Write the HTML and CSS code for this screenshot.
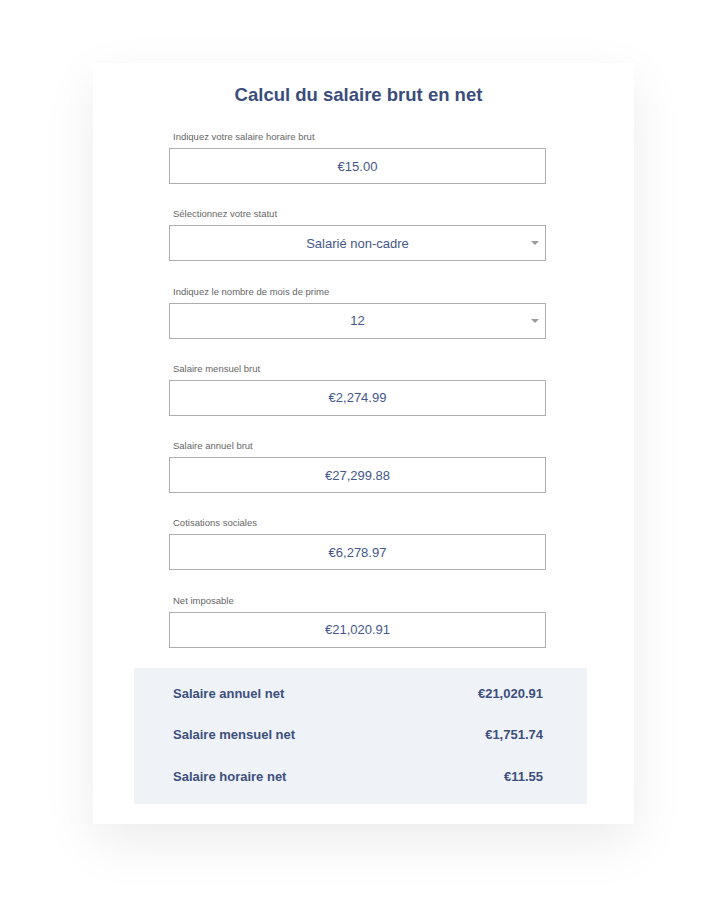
FILE: index.html
```
<!doctype html>
<html>
  <head>
    <meta charset="UTF-8" />
    <title>Calcul du salaire brut en net</title>
    <link rel="stylesheet" href="styles.css">
  </head>
  <body>
    <div class="card">
      <h1 class="title">Calcul du salaire brut en net</h1>

      <div class="fields">
        <div class="field">
          <label for="hourly">Indiquez votre salaire horaire brut</label>
          <input id="hourly" type="text" value="€15.00" />
        </div>

        <div class="field">
          <label for="status">Sélectionnez votre statut</label>
          <div class="select-wrap">
            <select id="status">
              <option>Salarié non-cadre</option>
              <option>Salarié cadre</option>
            </select>
          </div>
        </div>

        <div class="field">
          <label for="months">Indiquez le nombre de mois de prime</label>
          <div class="select-wrap">
            <select id="months">
              <option>12</option>
              <option>13</option>
              <option>14</option>
            </select>
          </div>
        </div>

        <div class="field">
          <label for="monthly-gross">Salaire mensuel brut</label>
          <input id="monthly-gross" type="text" value="€2,274.99" readonly />
        </div>

        <div class="field">
          <label for="annual-gross">Salaire annuel brut</label>
          <input id="annual-gross" type="text" value="€27,299.88" readonly />
        </div>

        <div class="field">
          <label for="social">Cotisations sociales</label>
          <input id="social" type="text" value="€6,278.97" readonly />
        </div>

        <div class="field">
          <label for="taxable">Net imposable</label>
          <input id="taxable" type="text" value="€21,020.91" readonly />
        </div>
      </div>

      <!-- Results -->
      <div class="results">
        <div class="result-row">
          <span>Salaire annuel net</span>
          <span>€21,020.91</span>
        </div>
        <div class="result-row">
          <span>Salaire mensuel net</span>
          <span>€1,751.74</span>
        </div>
        <div class="result-row">
          <span>Salaire horaire net</span>
          <span>€11.55</span>
        </div>
      </div>
    </div>
  </body>
</html>
```

FILE: styles.css
```
html {
  min-height: 100%;
  background-color: #fff;
}

body {
  font-family: "Liberation Sans", Arial, Helvetica, sans-serif;
  margin: 0;
  padding: 0 0 80px;
  color: #3c4f7d;
}

.card {
  width: 541px;
  margin: 63px 0 0 93px;
  padding: 21px 0 20px;
  box-sizing: border-box;
  background: white;
  box-shadow: 0 18px 50px rgba(0, 0, 0, 0.08);
}

.title {
  margin: 0 0 25px;
  padding-right: 10px;
  font-size: 18.5px;
  line-height: 22px;
  font-weight: bold;
  text-align: center;
  color: #3a4d7b;
}

.fields {
  width: 377px;
  margin-left: 76px;
}

.field {
  margin-bottom: 24.3px;
}

.field:last-child {
  margin-bottom: 20px;
}

.field label {
  display: block;
  font-size: 9.5px;
  line-height: 11px;
  margin-bottom: 6px;
  padding-left: 4px;
  color: #666;
}

.field input,
.field select {
  display: block;
  width: 100%;
  height: 36px;
  box-sizing: border-box;
  margin: 0;
  padding: 0 10px;
  border: 1px solid #aeaeae;
  border-radius: 0;
  background: white;
  font-family: inherit;
  font-size: 13px;
  color: #44578a;
  text-align: center;
  text-align-last: center;
  outline: none;
  appearance: none;
  -webkit-appearance: none;
}

.select-wrap {
  position: relative;
}

.select-wrap::after {
  content: "";
  position: absolute;
  right: 7px;
  top: 16px;
  border-left: 4px solid transparent;
  border-right: 4px solid transparent;
  border-top: 4px solid #9a9a9a;
  pointer-events: none;
}

.results {
  width: 453px;
  margin-left: 41px;
  padding: 18px 44px 19px 39px;
  box-sizing: border-box;
  background-color: #eff3f7;
  display: flex;
  flex-direction: column;
  gap: 25.5px;
}

.result-row {
  display: flex;
  justify-content: space-between;
  font-size: 13px;
  line-height: 16px;
  font-weight: bold;
  color: #3c4f7d;
}
```
